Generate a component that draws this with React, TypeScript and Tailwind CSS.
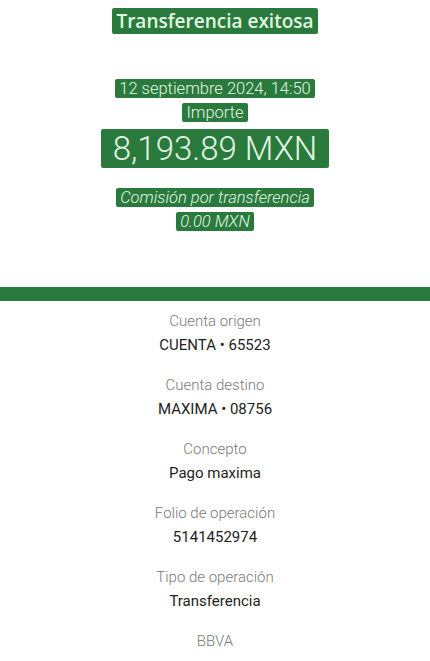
const details = [
  { label: "Cuenta origen", value: "CUENTA • 65523" },
  { label: "Cuenta destino", value: "MAXIMA • 08756" },
  { label: "Concepto", value: "Pago maxima" },
  { label: "Folio de operación", value: "5141452974" },
  { label: "Tipo de operación", value: "Transferencia" },
];

function Mark({ children, className = "" }: { children: React.ReactNode; className?: string }) {
  return (
    <span className={`bg-[#2a7a3e] text-[#e2f6e2] px-1 rounded-[2px] box-decoration-clone ${className}`}>{children}</span>
  );
}

export default function App() {
  return (
    <div className="w-[430px] h-[661px] overflow-hidden bg-white text-center font-['Roboto',sans-serif]">
      {/* Header */}
      <div className="pt-[9px] h-[287px]">
        <h1 className="text-[19px] leading-[24px] font-semibold font-['Open_Sans',sans-serif]">
          <Mark>Transferencia exitosa</Mark>
        </h1>
        <div className="mt-[44px] flex flex-col items-center font-light">
          <p className="text-[16.5px] leading-[24px]">
            <Mark>12 septiembre 2024, 14:50</Mark>
          </p>
          <p className="text-[16.5px] leading-[24px]">
            <Mark>Importe</Mark>
          </p>
          <p className="text-[33px] leading-[40px] mt-[4px]">
            <Mark className="px-3">8,193.89 MXN</Mark>
          </p>
          <p className="text-[16.5px] leading-[24px] italic mt-[17px]">
            <Mark>Comisión por transferencia</Mark>
          </p>
          <p className="text-[16.5px] leading-[24px] italic">
            <Mark>0.00 MXN</Mark>
          </p>
        </div>
      </div>

      <div className="h-[14px] bg-[#2a7a3e]" />

      {/* Details */}
      <div className="flex flex-col gap-[16px] pt-[8px]">
        {details.map((d) => (
          <div key={d.label} className="flex flex-col">
            <span className="text-[15px] leading-[24px] font-light text-[#7a7a7a]">{d.label}</span>
            <span className="text-[15px] leading-[24px] text-[#222]">{d.value}</span>
          </div>
        ))}
        <span className="text-[15px] leading-[24px] font-light text-[#7a7a7a]">BBVA</span>
      </div>
    </div>
  );
}
